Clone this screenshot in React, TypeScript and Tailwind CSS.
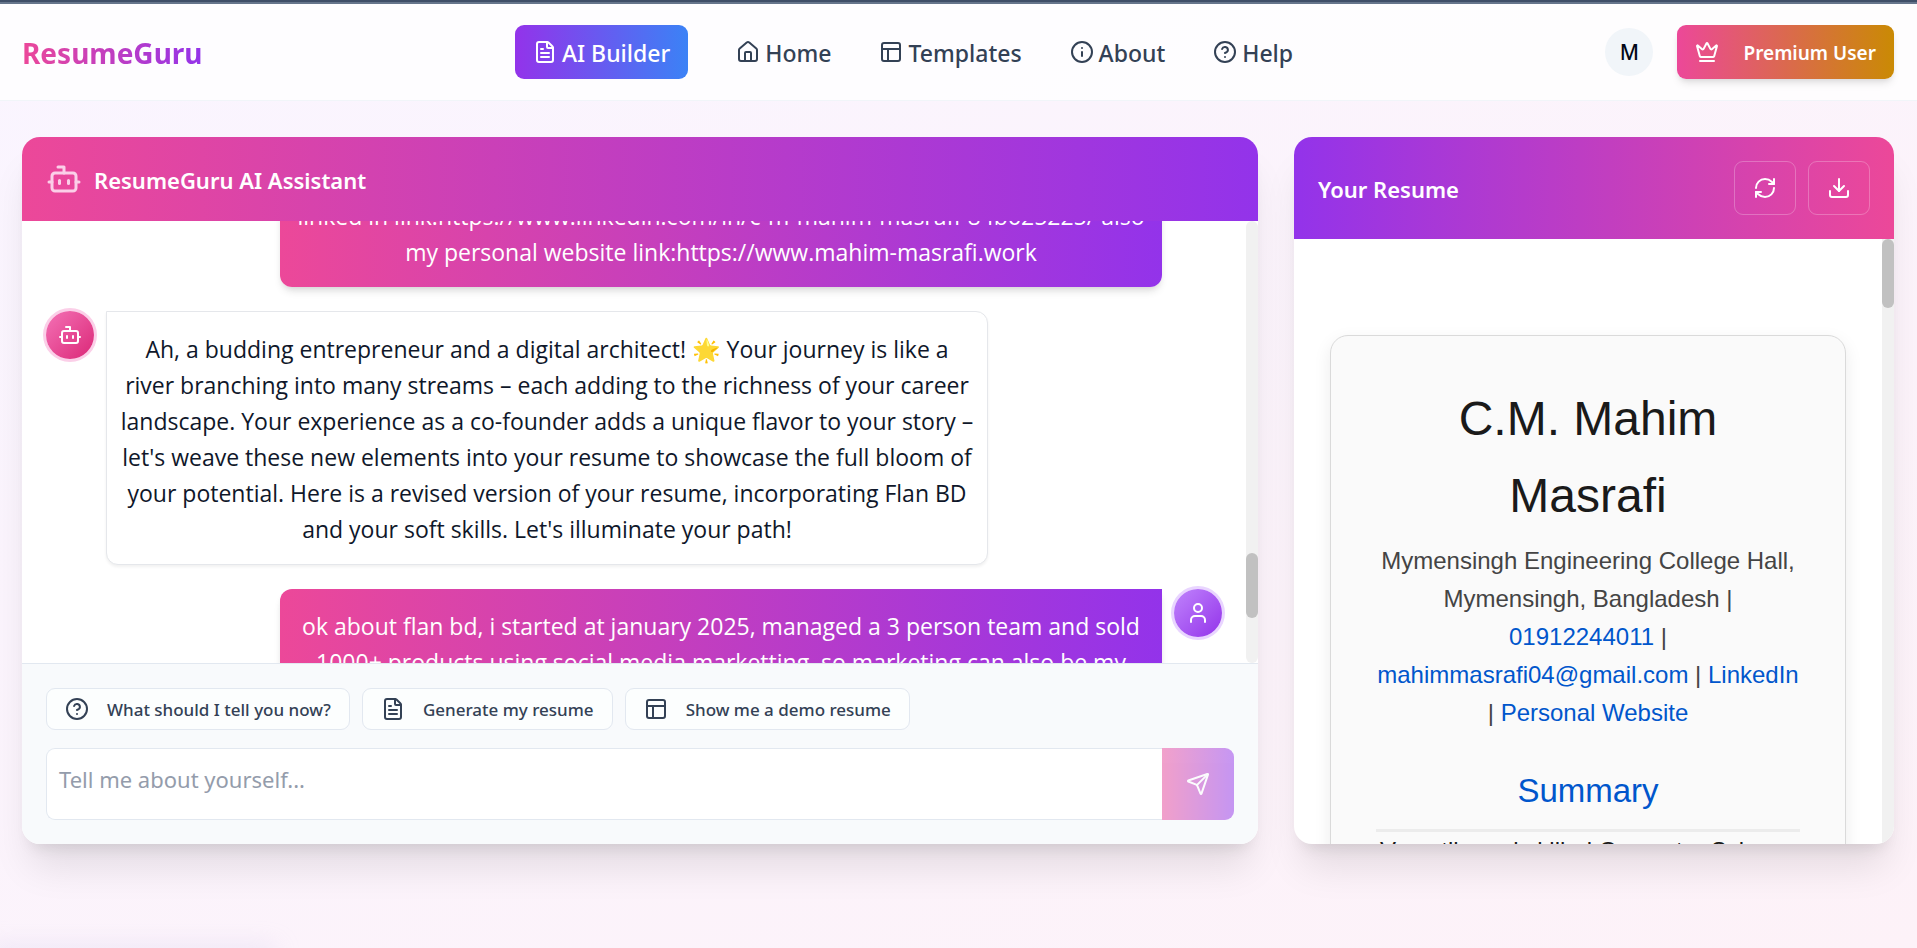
import { useLayoutEffect, useRef, useState } from 'react';
import type { ReactNode } from 'react';
import {
  Bot,
  CircleQuestionMark,
  Crown,
  Download,
  FileText,
  House,
  Info,
  PanelsTopLeft,
  RefreshCw,
  Send,
  User,
} from 'lucide-react';
import type { LucideIcon } from 'lucide-react';

const navLinks: { label: string; icon: LucideIcon; active?: boolean }[] = [
  { label: 'AI Builder', icon: FileText, active: true },
  { label: 'Home', icon: House },
  { label: 'Templates', icon: PanelsTopLeft },
  { label: 'About', icon: Info },
  { label: 'Help', icon: CircleQuestionMark },
];

const prompts: { label: string; icon: LucideIcon }[] = [
  { label: 'What should I tell you now?', icon: CircleQuestionMark },
  { label: 'Generate my resume', icon: FileText },
  { label: 'Show me a demo resume', icon: PanelsTopLeft },
];

const messages: { from: 'bot' | 'user'; lines: string[] }[] = [
  {
    from: 'user',
    lines: [
      'email: mahimmasrafi04@gmail.com, phone: 01912244011,',
      'linked in link:https://www.linkedin.com/in/c-m-mahim-masrafi-84b625225/ also',
      'my personal website link:https://www.mahim-masrafi.work',
    ],
  },
  {
    from: 'bot',
    lines: [
      'Ah, a budding entrepreneur and a digital architect! 🌟 Your journey is like a',
      'river branching into many streams – each adding to the richness of your career',
      'landscape. Your experience as a co-founder adds a unique flavor to your story –',
      "let's weave these new elements into your resume to showcase the full bloom of",
      'your potential. Here is a revised version of your resume, incorporating Flan BD',
      "and your soft skills. Let's illuminate your path!",
    ],
  },
  {
    from: 'user',
    lines: [
      'ok about flan bd, i started at january 2025, managed a 3 person team and sold',
      '1000+ products using social media marketting, so marketing can also be my',
    ],
  },
];

function Header() {
  return (
    <header className="border-b border-[#f1f5f9] bg-white/80">
      <div className="flex h-24 items-center justify-between pr-[23px] pl-[22px]">
        <a
          href="#"
          className="bg-linear-to-r/srgb from-[#ec4899] to-[#9333ea] bg-clip-text pt-0.5 text-[28px] leading-9 font-bold text-transparent"
        >
          ResumeGuru
        </a>
        <nav className="flex items-center gap-12">
          {navLinks.map(({ label, icon: Icon, active }) => (
            <a
              key={label}
              href="#"
              className={
                active
                  ? 'flex h-[54px] items-center gap-[5px] rounded-[9px] bg-linear-to-r/srgb from-[#9333ea] to-[#3b82f6] px-[18px] text-[23px] font-medium text-white'
                  : 'flex items-center gap-[5px] text-[23px] font-medium text-[#334155]'
              }
            >
              <Icon size={24} />
              <span className="pt-0.5 leading-8">{label}</span>
            </a>
          ))}
        </nav>
        <div className="flex items-center gap-6">
          <button
            type="button"
            aria-label="Account"
            className="flex size-12 items-center justify-center rounded-full bg-[#f1f5f9] pt-0.5 text-[21px] font-medium text-[#020817]"
          >
            M
          </button>
          <button
            type="button"
            className="flex h-[54px] items-center gap-6 rounded-[9px] bg-linear-to-r/srgb from-[#ec4899] to-[#ca8a04] px-[18px] text-[19px] font-semibold text-white shadow-[0_6px_9px_-2px_rgba(0,0,0,0.1),0_3px_6px_-3px_rgba(0,0,0,0.1)]"
          >
            <Crown size={24} />
            <span className="pt-0.5">Premium User</span>
          </button>
        </div>
      </div>
    </header>
  );
}

function Panel({ className = '', children }: { className?: string; children: ReactNode }) {
  return (
    <section
      className={
        'flex h-full min-h-0 flex-col overflow-hidden rounded-[18px] bg-white shadow-[0_30px_38px_-8px_rgba(0,0,0,0.1),0_12px_15px_-9px_rgba(0,0,0,0.1)] ' +
        className
      }
    >
      {children}
    </section>
  );
}

function Message({ from, lines }: { from: 'bot' | 'user'; lines: string[] }) {
  const isBot = from === 'bot';
  const Icon = isBot ? Bot : User;
  return (
    <div className={isBot ? 'flex items-start gap-3' : 'flex flex-row-reverse items-start gap-3'}>
      <div
        className={
          isBot
            ? 'flex size-12 shrink-0 items-center justify-center rounded-full bg-linear-to-br/srgb from-[#f472b6] to-[#db2777] text-white ring-3 ring-[#fbcfe8]'
            : 'flex size-12 shrink-0 items-center justify-center rounded-full bg-linear-to-br/srgb from-[#c084fc] to-[#9333ea] text-white ring-3 ring-[#e9d5ff]'
        }
      >
        <Icon size={24} />
      </div>
      <p
        className={
          isBot
            ? "w-3/4 rounded-xl rounded-tl-none border border-[#e5e7eb] bg-white px-3 pt-[19px] pb-[17px] text-center font-['Open_Sans','Noto_Color_Emoji',sans-serif] text-[23px] leading-9 whitespace-nowrap text-[#0f172a] shadow-[0_2px_3px_rgba(0,0,0,0.06)]"
            : "w-3/4 rounded-xl rounded-tr-none bg-linear-to-r/srgb from-[#ec4899] to-[#9333ea] px-3 pt-[19px] pb-[17px] text-center font-['Open_Sans','Noto_Color_Emoji',sans-serif] text-[23px] leading-9 whitespace-nowrap text-white shadow-[0_6px_9px_-2px_rgba(0,0,0,0.12),0_3px_6px_-3px_rgba(0,0,0,0.1)]"
        }
      >
        {lines.map((line) => (
          <span key={line} className="block">
            {line}
          </span>
        ))}
      </p>
    </div>
  );
}

function AssistantPanel() {
  const scroller = useRef<HTMLDivElement>(null);
  const [draft, setDraft] = useState('');

  useLayoutEffect(() => {
    if (scroller.current) scroller.current.scrollTop = 102;
  }, []);

  return (
    <Panel className="col-span-2">
      <div className="flex h-[84px] shrink-0 items-center gap-3 bg-linear-to-r/srgb from-[#ec4899] to-[#9333ea] px-6">
        <Bot size={36} className="text-[#fbcfe8]" />
        <h1 className="pt-0.5 text-[22px] leading-9 font-semibold text-white">
          ResumeGuru AI Assistant
        </h1>
      </div>

      <div className="flex min-h-0 flex-1">
        <div
          ref={scroller}
          className="flex min-w-0 flex-1 flex-col gap-6 overflow-x-hidden overflow-y-auto p-6 [scrollbar-width:none]"
        >
          {messages.map((m, i) => (
            <Message key={i} from={m.from} lines={m.lines} />
          ))}
        </div>
        <div className="flex w-3 shrink-0 flex-col rounded-full bg-[#f1f1f1]">
          <div className="grow-[332]" />
          <div className="h-[65px] rounded-full bg-[#c1c1c1]" />
          <div className="grow-[45]" />
        </div>
      </div>

      <div className="flex shrink-0 flex-col gap-[18px] border-t border-[#e2e8f0] bg-[#f8fafc] p-6">
        <div className="flex gap-3">
          {prompts.map(({ label, icon: Icon }) => (
            <button
              key={label}
              type="button"
              className="flex h-[42px] items-center gap-[18px] rounded-[9px] border border-[#e2e8f0] bg-[#fcfefe] px-[18px] text-[17px] font-medium text-[#334155]"
            >
              <Icon size={24} />
              <span className="pt-0.5">{label}</span>
            </button>
          ))}
        </div>
        <form className="flex h-[72px]" onSubmit={(e) => e.preventDefault()}>
          <textarea
            aria-label="Message"
            placeholder="Tell me about yourself..."
            value={draft}
            onChange={(e) => setDraft(e.target.value)}
            className="min-w-0 flex-1 resize-none rounded-l-[9px] border border-r-0 border-[#e2e8f0] bg-white p-3 text-[22px] leading-9 text-[#0f172a] placeholder:text-[#949cab]"
          />
          <button
            type="submit"
            aria-label="Send"
            className="flex w-[72px] items-center justify-center rounded-r-[9px] bg-linear-to-r/srgb from-[#ec4899] to-[#9333ea] text-white opacity-50"
          >
            <Send size={24} />
          </button>
        </form>
      </div>
    </Panel>
  );
}

function ResumePanel() {
  return (
    <Panel>
      <div className="flex shrink-0 items-center justify-between bg-linear-to-r/srgb from-[#9333ea] to-[#ec4899] p-6">
        <h2 className="pt-0.5 text-[22px] leading-9 font-semibold text-white">Your Resume</h2>
        <div className="flex gap-3 text-white">
          <button
            type="button"
            aria-label="Refresh resume"
            className="flex h-[54px] w-[62px] items-center justify-center rounded-[9px] border border-white/25"
          >
            <RefreshCw size={24} />
          </button>
          <button
            type="button"
            aria-label="Download resume"
            className="flex h-[54px] w-[62px] items-center justify-center rounded-[9px] border border-white/25"
          >
            <Download size={24} />
          </button>
        </div>
      </div>

      <div className="flex min-h-0 flex-1">
        <div className="min-w-0 flex-1 overflow-y-auto px-9 pt-24 [scrollbar-width:none]">
          <article className="rounded-[18px] border border-[#dadada] bg-[#fafafa] px-[45px] py-11 text-center font-['Liberation_Sans',sans-serif] text-[24px] leading-[38px] text-[#444444] shadow-[0_6px_18px_rgba(0,0,0,0.08)]">
            <h3 className="pb-2 text-[48px] leading-[77px] text-[#1a1a1a]">C.M. Mahim Masrafi</h3>
            <p>
              Mymensingh Engineering College Hall, Mymensingh, Bangladesh |{' '}
              <a href="#" className="text-[#0056cc]">01912244011</a> |{' '}
              <a href="#" className="text-[#0056cc]">mahimmasrafi04@gmail.com</a> |{' '}
              <a href="#" className="text-[#0056cc]">LinkedIn</a> |{' '}
              <a href="#" className="text-[#0056cc]">Personal Website</a>
            </p>
            <h4 className="mt-8 border-b-3 border-[#ececec] pb-3 text-[33px] leading-[53px] text-[#0056cc]">
              Summary
            </h4>
            <p className="text-[#1a1a1a]">Versatile and skilled Computer Science</p>
          </article>
        </div>
        <div className="w-3 shrink-0 bg-[#f1f1f1]">
          <div className="h-[69px] rounded-full bg-[#c1c1c1]" />
        </div>
      </div>
    </Panel>
  );
}

export default function App() {
  return (
    <div className="relative flex min-h-screen flex-col overflow-hidden bg-linear-to-br/srgb from-[#faf5ff] to-[#fdf2f8] font-['Noto_Sans','Noto_Color_Emoji',sans-serif]">
      <div className="h-1 border-b-2 border-[#66758c] bg-[#3f4f68]" />
      <Header />
      <main className="mt-9 grid h-[calc(100vh-241px)] grid-cols-3 gap-9 pr-[23px] pl-[22px]">
        <AssistantPanel />
        <ResumePanel />
      </main>
      <div className="absolute -bottom-3 -left-3 h-3 w-72 rounded-full bg-[#c7c0e8]/40 blur-md" />
    </div>
  );
}
